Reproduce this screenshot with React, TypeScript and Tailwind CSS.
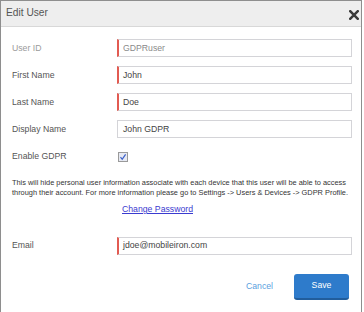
import React from "react"

function Field({ label, value, required, disabled }: { label: string; value: string; required?: boolean; disabled?: boolean }) {
    return (
        <div className="flex items-center h-[18px]">
            <div className={"w-[105px] " + (disabled ? "text-[#9a9a9a]" : "text-[#555]")}>{label}</div>
            <div
                className={
                    "w-[235px] h-[18px] flex items-center pl-[4px] border border-[#d4d4d8] " +
                    (required ? "border-l-2 border-l-[#e25b52] " : "pl-[5px] ") +
                    (disabled ? "text-[#8a8a8a]" : "text-[#444]")
                }
            >
                {value}
            </div>
        </div>
    )
}

export default function App() {
    return (
        <div className="w-[364px] h-[312px] bg-white font-['Liberation_Sans',Arial,sans-serif] text-[8.7px] leading-none">
            <div className="w-[362px] h-full border-l border-t border-r border-[#8e8e8e]">
                <div className="h-[26px] bg-[#eeeeee] border-b border-[#d8d8d8] flex items-center justify-between pl-[5px] pr-[2px]">
                    <h3 className="text-[10.2px] text-[#555]">Edit User</h3>
                    <svg width="10" height="10" viewBox="0 0 10 10" className="mt-[3px]">
                        <path d="M1.2 1.2 L8.8 8.8 M8.8 1.2 L1.2 8.8" stroke="#3a3a3a" strokeWidth="2.5" strokeLinecap="square" />
                    </svg>
                </div>
                <div className="pl-[11px] pt-[12px] flex flex-col">
                    <div className="flex flex-col gap-[9px]">
                        <Field label="User ID" value="GDPRuser" required disabled />
                        <Field label="First Name" value="John" required />
                        <Field label="Last Name" value="Doe" required />
                        <Field label="Display Name" value="John GDPR" />
                        <div className="flex items-center h-[18px]">
                            <div className="w-[105px] text-[#555]">Enable GDPR</div>
                            <div className="w-[10px] h-[10px] border border-[#9a9a9a] bg-[#e6e9f2] flex items-center justify-center ml-[1px] mt-[1px]">
                                <svg width="8" height="8" viewBox="0 0 8 8">
                                    <path d="M1.5 4.2 L3.2 6.3 L6.6 1.3" stroke="#3a5fc8" strokeWidth="1.2" fill="none" />
                                </svg>
                            </div>
                        </div>
                    </div>
                    <p className="mt-[13px] text-[7.4px] leading-[9.5px] text-[#333] w-[338px]">
                        This will hide personal user information associate with each device that this user will be able to access through their account. For more information please go to Settings -&gt; Users &amp; Devices -&gt; GDPR Profile.
                    </p>
                    <div className="mt-[8px] pl-[110px]">
                        <a className="text-[#3b3bd0] underline text-[8.7px]">Change Password</a>
                    </div>
                    <div className="mt-[23px]">
                        <Field label="Email" value="jdoe@mobileiron.com" required />
                    </div>
                    <div className="mt-[19px] flex items-center justify-end pr-[12px] gap-[21px]">
                        <span className="text-[#5a9fe0]">Cancel</span>
                        <button className="w-[55px] h-[26px] rounded-[3px] bg-[#2e7bcb] border-b-2 border-[#215d9c] text-white text-[8.7px]">Save</button>
                    </div>
                </div>
            </div>
        </div>
    )
}
